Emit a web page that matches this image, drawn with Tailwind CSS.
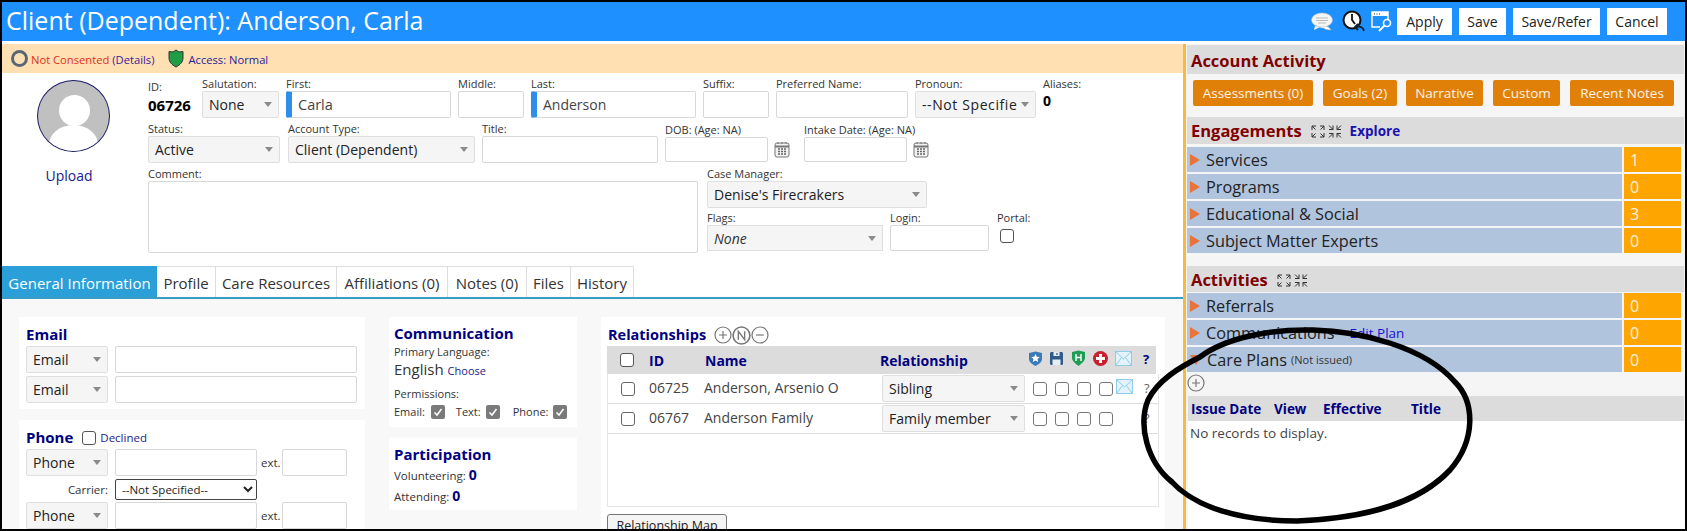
<!DOCTYPE html>
<html lang="en">
<head>
  <meta charset="UTF-8" />
  <meta name="viewport" content="width=device-width, initial-scale=1" />
  <title>Client (Dependent): Anderson, Carla</title>
  <script src="https://cdn.jsdelivr.net/npm/@tailwindcss/browser@4"></script>
</head>
<body class="bg-white font-['Open_Sans',sans-serif] text-[#333]">
  <!-- shared icons -->
  <svg class="hidden">
    <symbol id="arrow" viewBox="0 0 8 5"><path d="M0 0h8L4 5z" fill="#8a8a8a"/></symbol>
    <symbol id="tri" viewBox="0 0 10 12"><path d="M0 0l10 6L0 12z" fill="#e8743b"/></symbol>
    <symbol id="cal" viewBox="0 0 16 17"><rect x="1" y="2" width="14" height="14" rx="2" fill="#f2f2f2" stroke="#777"/><path d="M1 5.5h14" stroke="#777" stroke-width="2"/><path d="M4 1v2M8 1v2M12 1v2" stroke="#777"/><path d="M4 8h2M7 8h2M10 8h2M4 10.500h2M7 10.500h2M10 10.500h2M4 13h2M7 13h2M10 13h2" stroke="#666" stroke-width="1.300"/></symbol>
    <symbol id="expand" viewBox="0 0 14 13"><path d="M1 5V1h4M9 1h4v4M13 8v4H9M5 12H1V8M1 1l3.500 3.500M13 1L9.500 4.500M13 12L9.500 8.500M1 12l3.500-3.500" fill="none" stroke="#333"/></symbol>
    <symbol id="collapse" viewBox="0 0 14 13"><path d="M1 4.500h4v-4M9 .5v4h4M13 8.500H9v4M5 12.500v-4H1M1 .5l4 4M13 .5l-4 4M13 12.500l-4-4M1 12.500l4-4" fill="none" stroke="#333"/></symbol>
    <symbol id="plus" viewBox="0 0 18 18"><circle cx="9" cy="9" r="8" fill="none" stroke="#777" stroke-width="1.200"/><path d="M5 9h8M9 5v8" stroke="#777" stroke-width="1.200"/></symbol>
    <symbol id="mail" viewBox="0 0 17 15"><rect x=".5" y=".5" width="16" height="14" fill="#e4f3fb" stroke="#8fcdeb"/><path d="M1 1l7.500 7L16 1M1 14l5.500-7.500M16 14l-5.500-7.500" fill="none" stroke="#8fcdeb"/></symbol>
  </svg>

  <div class="relative w-[1687px] h-[531px] overflow-hidden border-2 border-black bg-white">
    <!-- top bar -->
    <header class="h-[39px] bg-[#1e90ff] flex items-center pl-[4px] pr-[18px]">
      <h1 class="text-[25px] leading-none text-white flex-1 pb-[2px]">Client (Dependent): Anderson, Carla</h1>
      <div class="flex items-center">
        <svg class="w-[24px] h-[20px] mr-[7px]" viewBox="0 0 24 20"><path d="M8 13c6 0 10 1 12 5-4 0-6-1-8-2-3 0-6-2-4-3z" fill="#fff" stroke="#9ab" stroke-width=".6"/><ellipse cx="11" cy="8" rx="10.500" ry="7" fill="#f5f5f5" stroke="#b9c6d4" stroke-width=".6"/><path d="M4 14l-1 4 6-3z" fill="#f5f5f5"/><path d="M5 6h12M5 8.500h12M7 11h8" stroke="#bbb"/></svg>
        <svg class="w-[23px] h-[23px] mr-[5px]" viewBox="0 0 23 23"><circle cx="10" cy="10" r="8.500" fill="#fff" stroke="#111" stroke-width="2"/><path d="M10 4v6l3 4" fill="none" stroke="#111" stroke-width="1.800"/><path d="M22 21c-1-4-4-5-8-4M16 14l-3 3 3 3" fill="none" stroke="#123" stroke-width="1.800"/></svg>
        <svg class="w-[23px] h-[23px] mr-[4px]" viewBox="0 0 23 23"><path d="M10 17H2V2h16v8" fill="#1e90ff" stroke="#fff" stroke-width="1.400"/><path d="M2 2h16v4H2z" fill="#fff"/><path d="M4 4h1M6.500 4h1M9 4h1" stroke="#333"/><circle cx="17" cy="13" r="3.500" fill="none" stroke="#fff" stroke-width="1.600"/><path d="M14.500 15.500L9 21" stroke="#fff" stroke-width="1.800"/></svg>
        <button class="w-[55px] h-[27px] bg-white text-[14px] text-[#222]">Apply</button>
        <button class="ml-[7px] w-[47px] h-[27px] bg-white text-[14px] text-[#222]">Save</button>
        <button class="ml-[7px] w-[87px] h-[27px] bg-white text-[14px] text-[#222]">Save/Refer</button>
        <button class="ml-[7px] w-[60px] h-[27px] bg-white text-[14px] text-[#222]">Cancel</button>
      </div>
    </header>

    <div class="flex h-[488px] pt-[3px]">
      <!-- left: account form -->
      <main class="w-[1181px] flex flex-col overflow-hidden">
        <div class="h-[29px] bg-[#ffe0b2] flex items-center text-[11.200px] pl-[9px]">
          <span class="w-[17px] h-[17px] rounded-full border-[3.500px] border-[#5a6674] mr-[3px]"></span>
          <span class="text-[#e03020] pt-[3px]">Not Consented</span>
          <span class="ml-[3px] text-[#3a1a9a] pt-[3px]">(Details)</span>
          <svg class="w-[16px] h-[19px] ml-[14px] mr-[4px]" viewBox="0 0 16 19"><path d="M8 1l3 2 4-.5V9c0 4-3 7-7 9-4-2-7-5-7-9V2.500L5 3z" fill="#1f9d45" stroke="#333"/></svg>
          <span class="text-[#2a1a9a] pt-[3px]">Access: Normal</span>
        </div>

        <div class="flex h-[193px]">
          <div class="w-[146px] shrink-0 pl-[35px] pt-[7px]">
            <div class="relative w-[73px] h-[72px] rounded-[50%] border border-[#1a1a6a] bg-[#c0c0c0] overflow-hidden">
              <div class="absolute left-[21px] top-[14px] w-[31px] h-[31px] rounded-full bg-white"></div>
              <div class="absolute left-[11px] top-[44px] w-[49px] h-[40px] rounded-[50%] bg-white"></div>
            </div>
            <div class="mt-[13px] -ml-[47px] text-center text-[14px] text-[#1a1a8a]">Upload</div>
          </div>

          <div class="pt-[4px]">
            <!-- row 1 -->
            <div class="flex gap-[7px] h-[41px]">
              <div class="w-[47px] pt-[3px]"><div class="text-[11px] leading-[14px]">ID:</div><div class="text-[15px] leading-[22px] font-bold text-black">06726</div></div>
              <div class="w-[77px]"><label class="block text-[11px] leading-[14px]">Salutation:</label><div class="h-[27px] bg-[#f5f5f5] border border-[#dfdfdf] rounded-[2px] flex items-center justify-between pl-[6px] pr-[6px] text-[14px] text-[#222]">None<svg class="w-[8px] h-[5px]"><use href="#arrow"/></svg></div></div>
              <div class="w-[165px]"><label class="block text-[11px] leading-[14px]">First:</label><div class="h-[27px] border border-[#d8d8d8] border-l-[6px] border-l-[#2f8fe8] rounded-[2px] pl-[6px] text-[14.500px] leading-[25px] text-[#444]">Carla</div></div>
              <div class="w-[66px]"><label class="block text-[11px] leading-[14px]">Middle:</label><input class="w-full h-[27px] border border-[#d8d8d8] rounded-[2px]" /></div>
              <div class="w-[165px]"><label class="block text-[11px] leading-[14px]">Last:</label><div class="h-[27px] border border-[#d8d8d8] border-l-[6px] border-l-[#2f8fe8] rounded-[2px] pl-[6px] text-[14px] leading-[25px] text-[#444]">Anderson</div></div>
              <div class="w-[66px]"><label class="block text-[11px] leading-[14px]">Suffix:</label><input class="w-full h-[27px] border border-[#d8d8d8] rounded-[2px]" /></div>
              <div class="w-[132px]"><label class="block text-[11px] leading-[14px]">Preferred Name:</label><input class="w-full h-[27px] border border-[#d8d8d8] rounded-[2px]" /></div>
              <div class="w-[121px]"><label class="block text-[11px] leading-[14px]">Pronoun:</label><div class="h-[27px] bg-[#f5f5f5] border border-[#dfdfdf] rounded-[2px] flex items-center justify-between pl-[6px] pr-[6px] text-[14px] text-[#222]"><span class="whitespace-nowrap tracking-[0.6px]">--Not Specifie</span><svg class="w-[8px] h-[5px]"><use href="#arrow"/></svg></div></div>
              <div><label class="block text-[11px] leading-[14px]">Aliases:</label><div class="text-[14px] leading-[20px] font-bold text-black">0</div></div>
            </div>
            <!-- row 2 -->
            <div class="flex mt-[4px] h-[41px]">
              <div class="w-[132px]"><label class="block text-[11px] leading-[14px]">Status:</label><div class="h-[27px] bg-[#f5f5f5] border border-[#dfdfdf] rounded-[2px] flex items-center justify-between pl-[6px] pr-[6px] text-[14px] text-[#222]">Active<svg class="w-[8px] h-[5px]"><use href="#arrow"/></svg></div></div>
              <div class="ml-[8px] w-[187px]"><label class="block text-[11px] leading-[14px]">Account Type:</label><div class="h-[27px] bg-[#f5f5f5] border border-[#dfdfdf] rounded-[2px] flex items-center justify-between pl-[6px] pr-[6px] text-[14px] text-[#222]">Client (Dependent)<svg class="w-[8px] h-[5px]"><use href="#arrow"/></svg></div></div>
              <div class="ml-[7px] w-[176px]"><label class="block text-[11px] leading-[14px]">Title:</label><input class="w-full h-[27px] border border-[#d8d8d8] rounded-[2px]" /></div>
              <div class="ml-[7px] w-[103px]"><label class="block text-[11px] leading-[14px] whitespace-nowrap pt-[1px]">DOB: (Age: NA)</label><input class="w-full h-[25px] border border-[#d8d8d8] rounded-[2px]" /></div>
              <svg class="ml-[6px] mt-[19px] w-[16px] h-[17px]"><use href="#cal"/></svg>
              <div class="ml-[14px] w-[103px]"><label class="block text-[11px] leading-[14px] whitespace-nowrap pt-[1px]">Intake Date: (Age: NA)</label><input class="w-full h-[25px] border border-[#d8d8d8] rounded-[2px]" /></div>
              <svg class="ml-[6px] mt-[19px] w-[16px] h-[17px]"><use href="#cal"/></svg>
            </div>
            <!-- row 3 -->
            <div class="flex mt-[4px]">
              <div class="w-[550px]"><label class="block text-[11px] leading-[14px]">Comment:</label><textarea class="block w-full h-[72px] border border-[#d8d8d8] rounded-[2px] resize-none"></textarea></div>
              <div class="ml-[9px]">
                <label class="block text-[11px] leading-[14px]">Case Manager:</label>
                <div class="w-[220px] h-[27px] bg-[#f5f5f5] border border-[#dfdfdf] rounded-[2px] flex items-center justify-between pl-[6px] pr-[6px] text-[14px] text-[#222]">Denise's Firecrakers<svg class="w-[8px] h-[5px]"><use href="#arrow"/></svg></div>
                <div class="flex mt-[3px]">
                  <div class="w-[176px]"><label class="block text-[11px] leading-[14px]">Flags:</label><div class="h-[26px] bg-[#f5f5f5] border border-[#dfdfdf] flex items-center justify-between pl-[6px] pr-[6px] text-[14px] italic text-[#333]">None<svg class="w-[8px] h-[5px]"><use href="#arrow"/></svg></div></div>
                  <div class="ml-[7px] w-[99px]"><label class="block text-[11px] leading-[14px]">Login:</label><input class="w-full h-[26px] border border-[#d8d8d8] rounded-[2px]" /></div>
                  <div class="ml-[8px]"><label class="block text-[11px] leading-[14px]">Portal:</label><input type="checkbox" class="block ml-[3px] mt-[4px] w-[14px] h-[14px] appearance-none border border-[#555] rounded-[3px] bg-white" /></div>
                </div>
              </div>
            </div>
          </div>
        </div>

        <!-- tabs -->
        <nav class="h-[33px] flex border-b-[2px] border-[#3a9cc4] text-[15px] text-[#333] shrink-0">
          <div class="w-[155px] pt-[3px] bg-[#2a9fd8] text-white flex items-center justify-center whitespace-nowrap">General Information</div>
          <div class="w-[59px] pt-[3px] border-t border-r border-[#ddd] flex items-center justify-center">Profile</div>
          <div class="w-[121px] pt-[3px] border-t border-r border-[#ddd] flex items-center justify-center whitespace-nowrap">Care Resources</div>
          <div class="w-[111px] pt-[3px] border-t border-r border-[#ddd] flex items-center justify-center whitespace-nowrap">Affiliations (0)</div>
          <div class="w-[79px] pt-[3px] border-t border-r border-[#ddd] flex items-center justify-center whitespace-nowrap">Notes (0)</div>
          <div class="w-[44px] pt-[3px] border-t border-r border-[#ddd] flex items-center justify-center">Files</div>
          <div class="w-[63px] pt-[3px] border-t border-r border-[#ddd] flex items-center justify-center">History</div>
        </nav>

        <!-- tab body -->
        <div class="flex-1 min-h-0 bg-[#f8f8f8] flex pl-[17px] pt-[18px] gap-[24px] overflow-hidden">
          <div class="w-[346px] shrink-0">
            <section class="h-[92px] bg-white px-[7px] pt-[7px]">
              <h2 class="text-[15px] leading-[21px] font-bold text-[#000080]">Email</h2>
              <div class="flex gap-[7px] mt-[1px]"><div class="w-[82px] h-[27px] bg-[#f5f5f5] border border-[#dfdfdf] rounded-[2px] flex items-center justify-between pl-[6px] pr-[6px] text-[14px] text-[#222]">Email<svg class="w-[8px] h-[5px]"><use href="#arrow"/></svg></div><input class="w-[242px] h-[27px] border border-[#d8d8d8] rounded-[2px]" /></div>
              <div class="flex gap-[7px] mt-[3px]"><div class="w-[82px] h-[27px] bg-[#f5f5f5] border border-[#dfdfdf] rounded-[2px] flex items-center justify-between pl-[6px] pr-[6px] text-[14px] text-[#222]">Email<svg class="w-[8px] h-[5px]"><use href="#arrow"/></svg></div><input class="w-[242px] h-[27px] border border-[#d8d8d8] rounded-[2px]" /></div>
            </section>
            <section class="mt-[11px] h-[120px] bg-white px-[7px] pt-[7px]">
              <div class="flex items-center h-[21px]"><h2 class="text-[15px] font-bold text-[#000080]">Phone</h2><input type="checkbox" class="ml-[9px] w-[14px] h-[14px] appearance-none border border-[#555] rounded-[3px] bg-white" /><span class="ml-[4px] text-[11.500px] text-[#1a1a8a]">Declined</span></div>
              <div class="flex items-center mt-[1px]"><div class="w-[82px] h-[27px] bg-[#f5f5f5] border border-[#dfdfdf] rounded-[2px] flex items-center justify-between pl-[6px] pr-[6px] text-[14px] text-[#222]">Phone<svg class="w-[8px] h-[5px]"><use href="#arrow"/></svg></div><input class="ml-[7px] w-[142px] h-[27px] border border-[#d8d8d8] rounded-[2px]" /><span class="ml-[4px] w-[21px] text-[11.500px]">ext.</span><input class="w-[65px] h-[27px] border border-[#d8d8d8] rounded-[2px]" /></div>
              <div class="flex items-center mt-[3px]"><span class="w-[82px] text-right text-[11.500px]">Carrier:</span><select class="ml-[7px] w-[142px] h-[21px] bg-white border border-[#444] rounded-[2px] text-[11.500px] text-[#222] pl-[2px]"><option>--Not Specified--</option></select></div>
              <div class="flex items-center mt-[2px]"><div class="w-[82px] h-[27px] bg-[#f5f5f5] border border-[#dfdfdf] rounded-[2px] flex items-center justify-between pl-[6px] pr-[6px] text-[14px] text-[#222]">Phone<svg class="w-[8px] h-[5px]"><use href="#arrow"/></svg></div><input class="ml-[7px] w-[142px] h-[27px] border border-[#d8d8d8] rounded-[2px]" /><span class="ml-[4px] w-[21px] text-[11.500px]">ext.</span><input class="w-[65px] h-[27px] border border-[#d8d8d8] rounded-[2px]" /></div>
            </section>
          </div>

          <div class="w-[188px] shrink-0">
            <section class="h-[110px] bg-white pl-[5px] pt-[6px]">
              <h2 class="text-[15px] leading-[20px] font-bold text-[#000080]">Communication</h2>
              <div class="text-[11px] leading-[15px] mt-[1px]">Primary Language:</div>
              <div class="flex items-baseline leading-[21px]"><span class="text-[15px]">English</span><span class="ml-[4px] text-[11px] text-[#1a1a8a]">Choose</span></div>
              <div class="text-[11px] leading-[15px] mt-[5px]">Permissions:</div>
              <div class="flex items-center text-[11px] mt-[3px]">
                <span>Email:</span><span class="ml-[6px] w-[14px] h-[14px] rounded-[2px] bg-[#7a7a7a] flex items-center justify-center"><svg class="w-[10px] h-[10px]" viewBox="0 0 10 10"><path d="M1.500 5.500l2.500 2.500 4.500-6" fill="none" stroke="#fff" stroke-width="1.500"/></svg></span>
                <span class="ml-[11px]">Text:</span><span class="ml-[5px] w-[14px] h-[14px] rounded-[2px] bg-[#7a7a7a] flex items-center justify-center"><svg class="w-[10px] h-[10px]" viewBox="0 0 10 10"><path d="M1.500 5.500l2.500 2.500 4.500-6" fill="none" stroke="#fff" stroke-width="1.500"/></svg></span>
                <span class="ml-[13px]">Phone:</span><span class="ml-[5px] w-[14px] h-[14px] rounded-[2px] bg-[#7a7a7a] flex items-center justify-center"><svg class="w-[10px] h-[10px]" viewBox="0 0 10 10"><path d="M1.500 5.500l2.500 2.500 4.500-6" fill="none" stroke="#fff" stroke-width="1.500"/></svg></span>
              </div>
            </section>
            <section class="mt-[11px] h-[72px] bg-white pl-[5px] pt-[6px]">
              <h2 class="text-[15px] leading-[20px] font-bold text-[#000080]">Participation</h2>
              <div class="text-[11.500px] leading-[20px] mt-[1px]">Volunteering: <b class="text-[14px] text-[#000080]">0</b></div>
              <div class="text-[11.500px] leading-[20px]">Attending: <b class="text-[14px] text-[#000080]">0</b></div>
            </section>
          </div>

          <section class="w-[564px] shrink-0 bg-white pl-[6px] pr-[7px] pt-[7px]">
            <div class="flex items-center h-[22px] pl-[1px]">
              <h2 class="text-[14.500px] font-bold text-[#000080]">Relationships</h2>
              <svg class="ml-[8px] w-[18px] h-[18px]"><use href="#plus"/></svg>
              <svg class="w-[19px] h-[19px]" viewBox="0 0 18 18"><circle cx="9" cy="9" r="8" fill="none" stroke="#777" stroke-width="1.500"/><path d="M6 13V5l6 8V5" fill="none" stroke="#777" stroke-width="1.300"/></svg>
              <svg class="w-[18px] h-[18px]" viewBox="0 0 18 18"><circle cx="9" cy="9" r="8" fill="none" stroke="#777" stroke-width="1.200"/><path d="M5 9h8" stroke="#777" stroke-width="1.200"/></svg>
            </div>
            <div class="h-[28px] w-[549px] bg-[#dcdcdc] flex items-center text-[14px] font-bold text-[#000080] relative">
              <input type="checkbox" class="ml-[13px] w-[14px] h-[14px] appearance-none border border-[#555] rounded-[3px] bg-white" />
              <span class="ml-[15px] w-[56px]">ID</span>
              <span class="w-[175px]">Name</span>
              <span class="w-[148px]">Relationship</span>
              <svg class="w-[15px] h-[15px] -mt-[4px]" viewBox="0 0 15 15"><path d="M1 2l6.500-1.500L14 2v6c0 3-3 5-6.500 7C4 13 1 11 1 8z" fill="#3b7bb8"/><path d="M7.500 3l1.300 2.800 3 .3-2.300 2 .7 3-2.700-1.600-2.700 1.600.7-3-2.300-2 3-.3z" fill="#fff"/></svg>
              <svg class="ml-[6px] w-[15px] h-[15px] -mt-[4px]" viewBox="0 0 15 15"><path d="M2 1h11l1 1v11l-1 1H2l-1-1V2z" fill="#2f5a8a"/><path d="M4.500 1h6v4h-6zM3.500 8.500h8V14h-8z" fill="#e6edf3"/><path d="M8 2v2" stroke="#2f5a8a" stroke-width="1.300"/></svg>
              <svg class="ml-[7px] w-[15px] h-[16px] -mt-[4px]" viewBox="0 0 15 16"><path d="M1 2l6.500-1.500L14 2v6c0 3-3 5-6.500 8C4 13 1 11 1 8z" fill="#1f9d55"/><path d="M5 4v7M10 4v7M5 7.500h5" stroke="#fff" stroke-width="1.400"/></svg>
              <svg class="ml-[7px] w-[15px] h-[15px] -mt-[4px]" viewBox="0 0 15 15"><circle cx="7.500" cy="7.500" r="7.500" fill="#c8202f"/><path d="M6 3h3v3h3v3H9v3H6V9H3V6h3z" fill="#fff"/></svg>
              <svg class="ml-[7px] w-[17px] h-[15px] -mt-[4px]"><use href="#mail"/></svg>
              <span class="ml-[11px] text-[13px]">?</span>
            </div>
            <div class="w-[552px] h-[133px] border-x border-b border-[#e4e4e4] text-[14px] text-[#444]">
              <div class="h-[30px] border-b border-[#ddd] flex items-center">
                <input type="checkbox" class="ml-[13px] w-[14px] h-[14px] appearance-none border border-[#666] rounded-[3px] bg-white" />
                <span class="ml-[14px] w-[55px] -mt-[2px]">06725</span>
                <span class="w-[178px] whitespace-nowrap -mt-[2px]">Anderson, Arsenio O</span>
                <div class="w-[143px] h-[27px] bg-[#f5f5f5] border border-[#dfdfdf] rounded-[2px] flex items-center justify-between pl-[6px] pr-[6px] text-[14px] text-[#222]">Sibling<svg class="w-[8px] h-[5px]"><use href="#arrow"/></svg></div>
                <input type="checkbox" class="ml-[8px] w-[14px] h-[14px] appearance-none border border-[#777] rounded-[3px] bg-white" />
                <input type="checkbox" class="ml-[8px] w-[14px] h-[14px] appearance-none border border-[#777] rounded-[3px] bg-white" />
                <input type="checkbox" class="ml-[8px] w-[14px] h-[14px] appearance-none border border-[#777] rounded-[3px] bg-white" />
                <input type="checkbox" class="ml-[8px] w-[14px] h-[14px] appearance-none border border-[#777] rounded-[3px] bg-white" />
                <svg class="ml-[3px] w-[17px] h-[15px] -mt-[4px]"><use href="#mail"/></svg>
                <span class="ml-[11px] text-[13px] text-[#666]">?</span>
              </div>
              <div class="h-[30px] border-b border-[#ddd] flex items-center">
                <input type="checkbox" class="ml-[13px] w-[14px] h-[14px] appearance-none border border-[#666] rounded-[3px] bg-white" />
                <span class="ml-[14px] w-[55px] -mt-[2px]">06767</span>
                <span class="w-[178px] whitespace-nowrap -mt-[2px]">Anderson Family</span>
                <div class="w-[143px] h-[27px] bg-[#f5f5f5] border border-[#dfdfdf] rounded-[2px] flex items-center justify-between pl-[6px] pr-[6px] text-[14px] text-[#222]">Family member<svg class="w-[8px] h-[5px]"><use href="#arrow"/></svg></div>
                <input type="checkbox" class="ml-[8px] w-[14px] h-[14px] appearance-none border border-[#777] rounded-[3px] bg-white" />
                <input type="checkbox" class="ml-[8px] w-[14px] h-[14px] appearance-none border border-[#777] rounded-[3px] bg-white" />
                <input type="checkbox" class="ml-[8px] w-[14px] h-[14px] appearance-none border border-[#777] rounded-[3px] bg-white" />
                <input type="checkbox" class="ml-[8px] w-[14px] h-[14px] appearance-none border border-[#777] rounded-[3px] bg-white" />
                <span class="ml-[31px] text-[13px] text-[#666]">?</span>
              </div>
            </div>
            <button class="mt-[7px] w-[120px] h-[24px] border border-[#777] rounded-[3px] bg-[#f4f4f4] text-[12.500px] text-[#222]">Relationship Map</button>
          </section>
        </div>
      </main>

      <!-- right: activity panel -->
      <aside class="w-[502px] border-l-[3px] border-[#f5b944] bg-[#f5f5f5] flex flex-col overflow-hidden pt-[1px]">
        <div class="h-[29px] bg-[#dcdcdc] mr-[1px] ml-[1px] pl-[4px] pt-[3px] flex items-center text-[16.500px] font-bold text-[#800000]">Account Activity</div>
        <div class="flex pl-[7px] mt-[6px] text-[13.500px] text-white/90">
          <div class="w-[120px] h-[26px] rounded-[2px] bg-[#e08008] flex items-center justify-center">Assessments (0)</div>
          <div class="ml-[10px] w-[74px] h-[26px] rounded-[2px] bg-[#e08008] flex items-center justify-center">Goals (2)</div>
          <div class="ml-[9px] w-[77px] h-[26px] rounded-[2px] bg-[#e08008] flex items-center justify-center">Narrative</div>
          <div class="ml-[10px] w-[67px] h-[26px] rounded-[2px] bg-[#e08008] flex items-center justify-center">Custom</div>
          <div class="ml-[10px] w-[104px] h-[26px] rounded-[2px] bg-[#e08008] flex items-center justify-center">Recent Notes</div>
        </div>

        <div class="mt-[11px] h-[27px] bg-[#dcdcdc] mx-[1px] pl-[4px] pt-[2px] flex items-center">
          <span class="text-[16.500px] font-bold text-[#800000]">Engagements</span>
          <svg class="ml-[9px] w-[14px] h-[13px]"><use href="#expand"/></svg>
          <svg class="ml-[3px] w-[14px] h-[13px]"><use href="#collapse"/></svg>
          <span class="ml-[8px] text-[13.500px] font-bold text-[#1a10b0]">Explore</span>
        </div>
        <div class="mt-[3px] flex flex-col gap-[2px] pl-[1px] text-[16.300px] text-[#222]">
          <div class="flex h-[25px] gap-[2px]"><div class="w-[435px] bg-[#b0c4de] flex items-center pl-[3px] pt-[1px]"><svg class="w-[10px] h-[12px] mr-[6px]"><use href="#tri"/></svg>Services</div><div class="w-[57px] bg-[#ffa500] text-white/85 flex items-center pl-[6px] text-[16px]">1</div></div>
          <div class="flex h-[25px] gap-[2px]"><div class="w-[435px] bg-[#b0c4de] flex items-center pl-[3px] pt-[1px]"><svg class="w-[10px] h-[12px] mr-[6px]"><use href="#tri"/></svg>Programs</div><div class="w-[57px] bg-[#ffa500] text-white/85 flex items-center pl-[6px] text-[16px]">0</div></div>
          <div class="flex h-[25px] gap-[2px]"><div class="w-[435px] bg-[#b0c4de] flex items-center pl-[3px] pt-[1px]"><svg class="w-[10px] h-[12px] mr-[6px]"><use href="#tri"/></svg>Educational &amp; Social</div><div class="w-[57px] bg-[#ffa500] text-white/85 flex items-center pl-[6px] text-[16px]">3</div></div>
          <div class="flex h-[25px] gap-[2px]"><div class="w-[435px] bg-[#b0c4de] flex items-center pl-[3px] pt-[1px]"><svg class="w-[10px] h-[12px] mr-[6px]"><use href="#tri"/></svg>Subject Matter Experts</div><div class="w-[57px] bg-[#ffa500] text-white/85 flex items-center pl-[6px] text-[16px]">0</div></div>
        </div>

        <div class="mt-[13px] h-[26px] bg-[#dcdcdc] mx-[1px] pl-[4px] pt-[2px] flex items-center">
          <span class="text-[16.500px] font-bold text-[#800000]">Activities</span>
          <svg class="ml-[9px] w-[14px] h-[13px]"><use href="#expand"/></svg>
          <svg class="ml-[3px] w-[14px] h-[13px]"><use href="#collapse"/></svg>
        </div>
        <div class="mt-[1px] flex flex-col gap-[2px] pl-[1px] text-[16.300px] text-[#222]">
          <div class="flex h-[25px] gap-[2px]"><div class="w-[435px] bg-[#b0c4de] flex items-center pl-[3px] pt-[1px]"><svg class="w-[10px] h-[12px] mr-[6px]"><use href="#tri"/></svg>Referrals</div><div class="w-[57px] bg-[#ffa500] text-white/85 flex items-center pl-[6px] text-[16px]">0</div></div>
          <div class="flex h-[25px] gap-[2px]"><div class="w-[435px] bg-[#b0c4de] flex items-center pl-[3px] pt-[1px]"><svg class="w-[10px] h-[12px] mr-[6px]"><use href="#tri"/></svg>Communications<span class="ml-[15px] text-[13.500px] text-[#1a10d0]">Edit Plan</span></div><div class="w-[57px] bg-[#ffa500] text-white/85 flex items-center pl-[6px] text-[16px]">0</div></div>
          <div class="flex h-[25px] gap-[2px]"><div class="w-[435px] bg-[#b0c4de] flex items-center pl-[3px] pt-[1px]"><svg class="w-[12px] h-[10px] mr-[5px]" viewBox="0 0 12 10"><path d="M0 0h12L6 10z" fill="#e8743b"/></svg>Care Plans<span class="ml-[4px] text-[11px] text-[#333]">(Not issued)</span></div><div class="w-[57px] bg-[#ffa500] text-white/85 flex items-center pl-[6px] text-[16px]">0</div></div>
        </div>
        <svg class="ml-[1px] mt-[2px] w-[18px] h-[18px]"><use href="#plus"/></svg>
        <div class="mt-[4px] ml-[2px] mr-[1px] h-[25px] bg-[#dcdcdc] flex items-center pt-[1px] text-[13.500px] font-bold text-[#000080]">
          <span class="ml-[3px] w-[83px] whitespace-nowrap">Issue Date</span>
          <span class="w-[49px]">View</span>
          <span class="w-[88px]">Effective</span>
          <span>Title</span>
        </div>
        <div class="flex-1 bg-white ml-[2px] pl-[2px] pt-[2px] text-[13.500px] text-[#444]">No records to display.</div>
      </aside>
    </div>

    <!-- hand drawn circle on the screenshot -->
    <svg class="absolute left-[-2px] top-[-2px] w-[1687px] h-[531px] pointer-events-none" viewBox="0 0 1687 531"><path d="M1200 357C1225 338 1270 329 1313 330C1360 331 1425 347 1455 382C1475 402 1476 440 1450 470C1420 502 1370 518 1297 521C1240 521 1195 507 1172 482C1147 462 1138 425 1148 400C1158 380 1180 367 1200 357Z" fill="none" stroke="#000" stroke-width="5.500"/></svg>
  </div>
</body>
</html>
